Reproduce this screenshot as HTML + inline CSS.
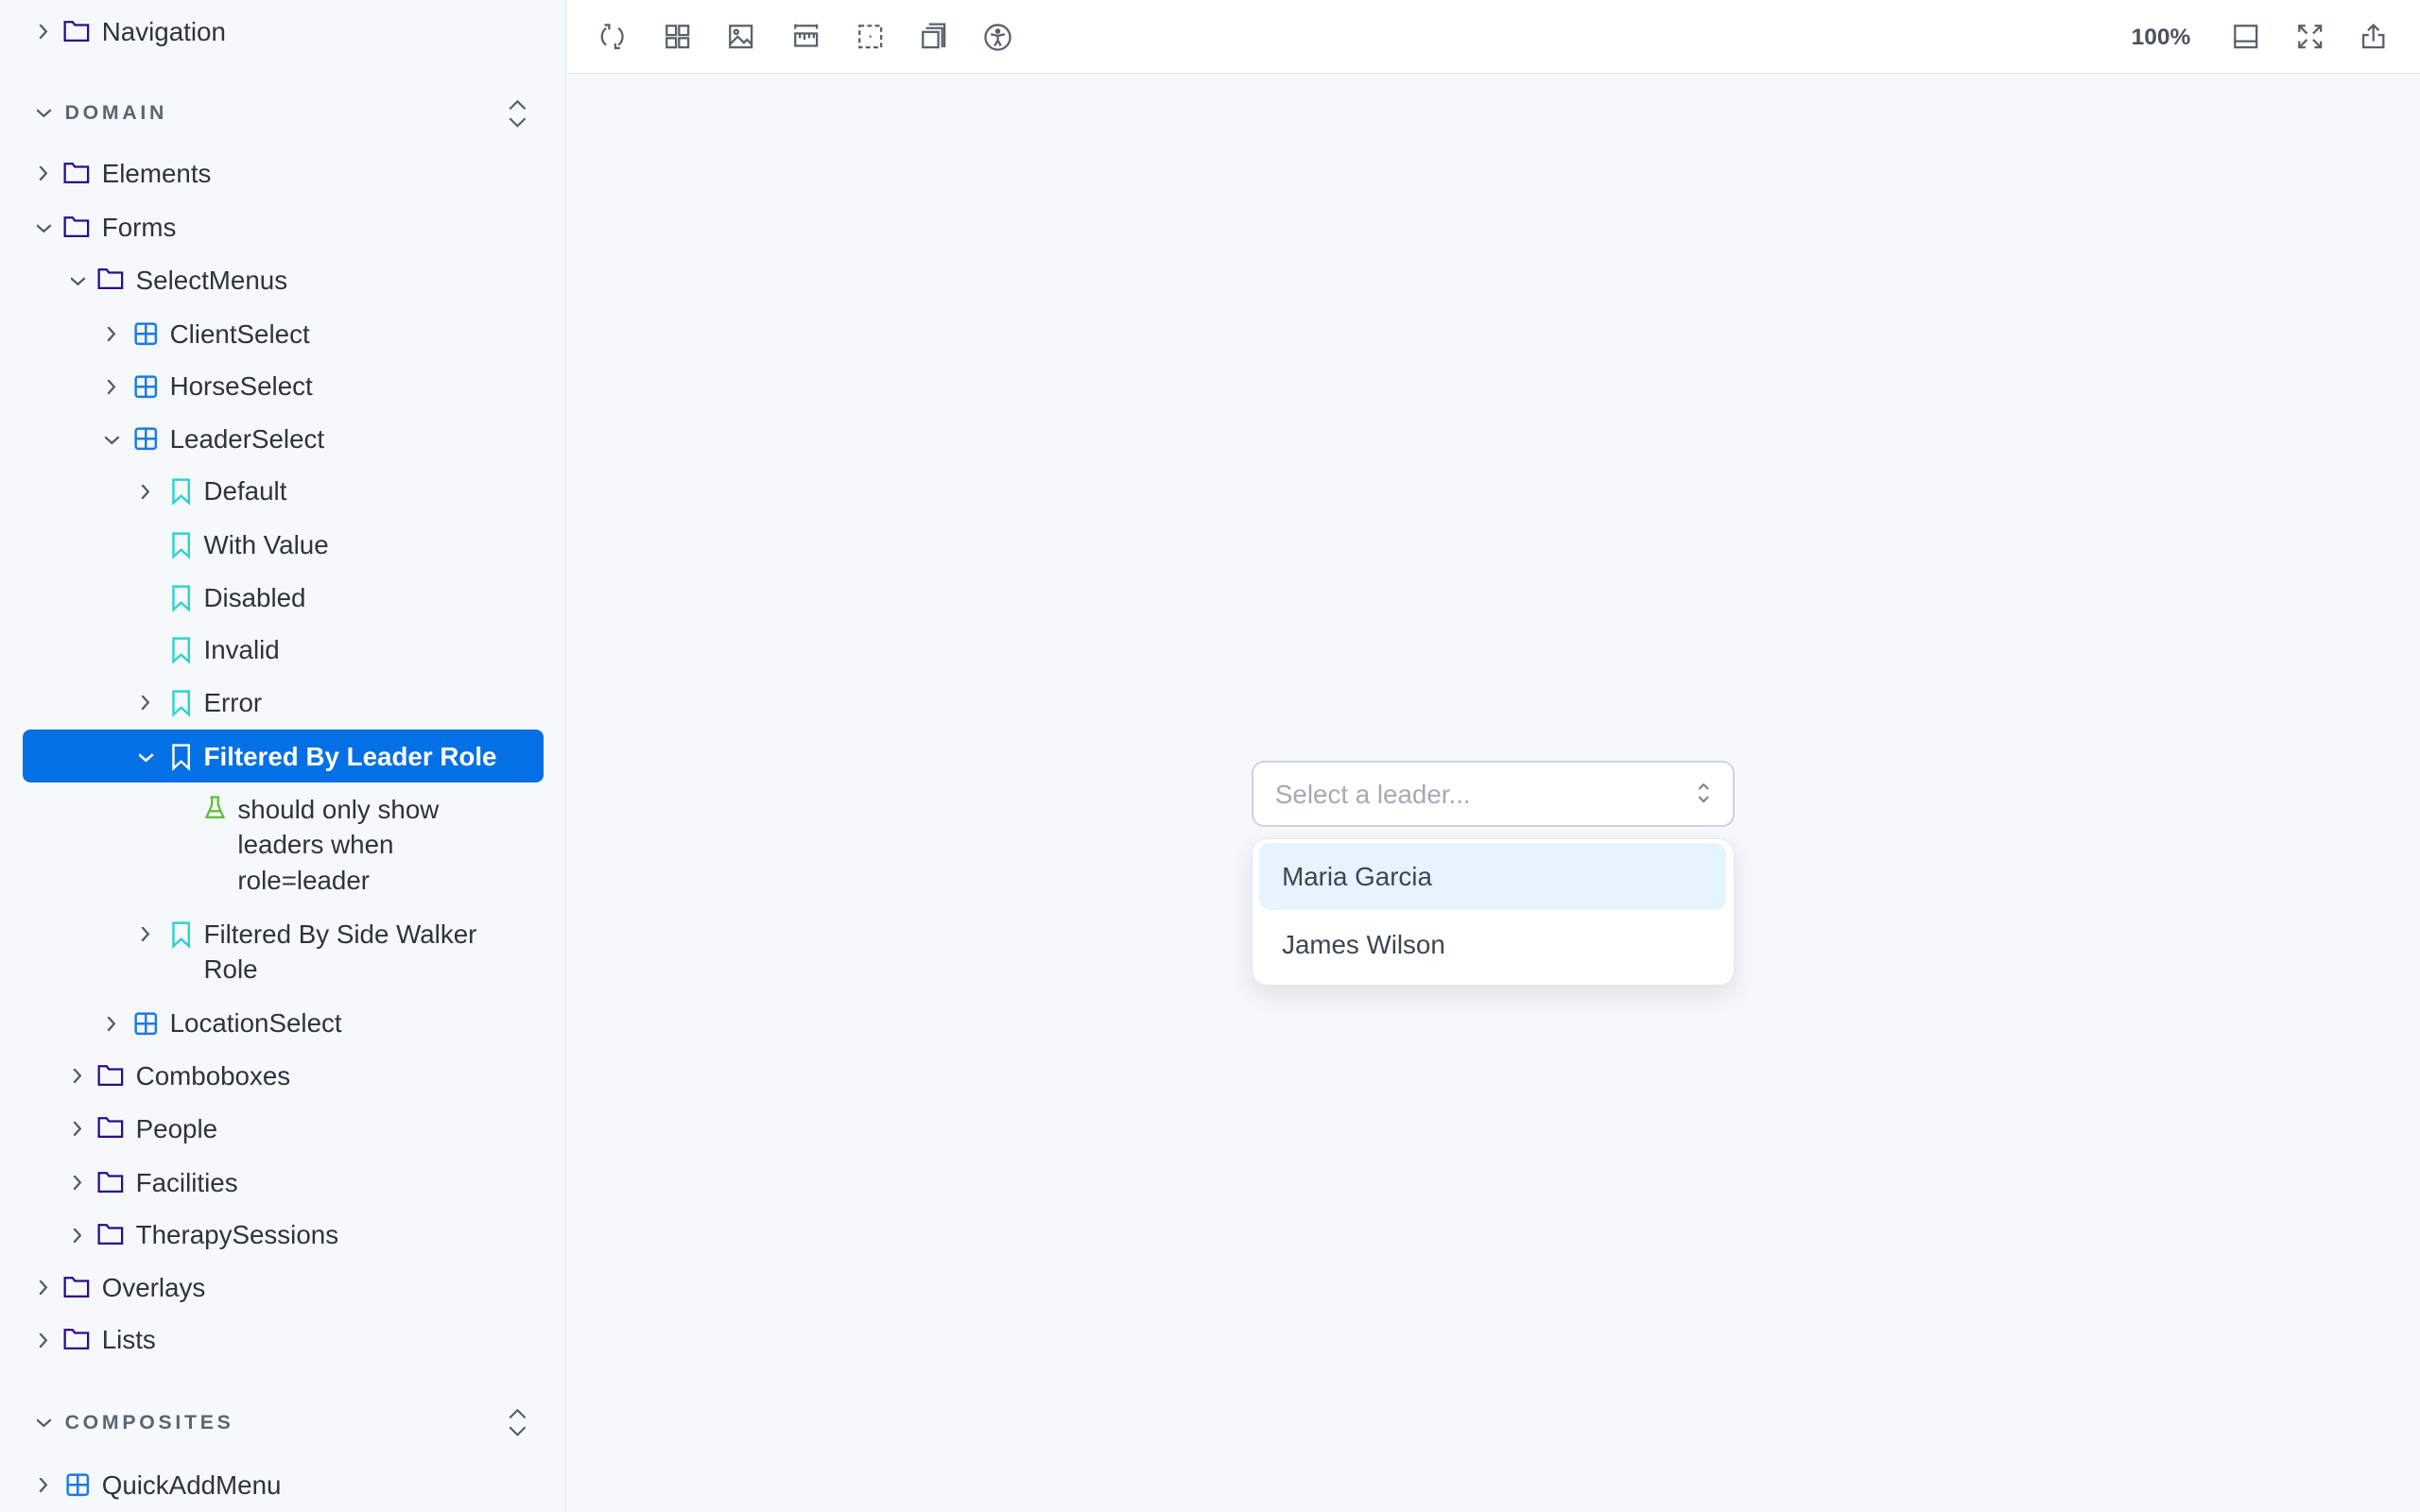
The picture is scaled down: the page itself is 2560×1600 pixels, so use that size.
<!DOCTYPE html>
<html><head><meta charset="utf-8"><style>
*{box-sizing:border-box;margin:0;padding:0}
html,body{width:2560px;height:1600px;overflow:hidden;background:#f6f9fc}
#root{zoom:1.63265;width:1568px;height:980px;position:relative;font-family:"Liberation Sans",sans-serif;color:#2e3438}
.side{position:absolute;left:0;top:0;width:367px;height:980px;background:#f6f9fc;border-right:1px solid #e3e7ec}
.row{position:absolute;font-size:17px;line-height:23px;white-space:nowrap}
.row svg{position:absolute}
.hdr{position:absolute;font-size:13px;font-weight:bold;letter-spacing:2.3px;color:#5c6670}
.sel{position:absolute;left:15px;top:473px;width:337px;height:34px;background:#0370e6;border-radius:5px}
.main{position:absolute;left:368px;top:0;right:0;bottom:0;background:#f6f8fb}
.tb{position:absolute;left:0;top:0;right:0;height:48px;background:#fff;border-bottom:1px solid #e3e7ec}
.tb svg{position:absolute;top:15px}
</style></head><body><div id="root">
<div class="side">
<svg width="0" height="0" style="position:absolute">
<defs>
<g id="chr"><path d="M2 0l4 4.5L2 9" fill="none" stroke="#555c63" stroke-width="1.4"/></g>
<g id="chd"><path d="M0 2l4.5 4L9 2" fill="none" stroke="#555c63" stroke-width="1.4"/></g>
<g id="fold"><path d="M1 2h5l1.5 2H16v10H1z" fill="none" stroke="#2c0b8a" stroke-width="1.4"/></g>
<g id="comp"><rect x="1" y="1" width="13" height="13" rx="1.5" fill="none" stroke="#1b7ae6" stroke-width="1.5"/><path d="M7.5 1v13M1 7.5h13" stroke="#1b7ae6" stroke-width="1.5"/></g>
<g id="bm"><path d="M1.5 1h10v15l-5-4.5-5 4.5z" fill="none" stroke="#2ed3d0" stroke-width="1.5"/></g>
<g id="bmw"><path d="M1.5 1h10v15l-5-4.5-5 4.5z" fill="none" stroke="#fff" stroke-width="1.5"/></g>
</defs></svg>

<div class="row" style="left:0;top:9px"><svg style="left:24px;top:7px" width="9" height="10"><use href="#chr"/></svg><svg style="left:41px;top:3px" width="18" height="16"><use href="#fold"/></svg><span style="position:absolute;left:66px">Navigation</span></div>

<div class="hdr" style="left:42px;top:66px">DOMAIN</div>
<svg style="position:absolute;left:24px;top:69px" width="10" height="8"><use href="#chd"/></svg>
<svg style="position:absolute;left:328px;top:64px" width="14" height="20"><path d="M2 7l5-5 5 5M2 13l5 5 5-5" fill="none" stroke="#555c63" stroke-width="1.3"/></svg>

<div class="sel"></div>

<div id="tree"></div>

<div class="hdr" style="left:42px;top:915px">COMPOSITES</div>
<svg style="position:absolute;left:24px;top:918px" width="10" height="8"><use href="#chd"/></svg>
<svg style="position:absolute;left:328px;top:912px" width="14" height="20"><path d="M2 7l5-5 5 5M2 13l5 5 5-5" fill="none" stroke="#555c63" stroke-width="1.3"/></svg>
</div>

<div class="main">
<div class="tb">
<svg style="left:20px" width="18" height="18" viewBox="0 0 18 18" fill="none" stroke="#59616a" stroke-width="1.4"><path d="M5 3.5A7 7 0 0 0 5 14.5M13 3.5A7 7 0 0 1 13 14.5M4 1.5h3v3M14 16.5h-3v-3"/></svg>
<svg style="left:62px" width="18" height="18" fill="none" stroke="#59616a" stroke-width="1.4"><rect x="2" y="2" width="6" height="6"/><rect x="10" y="2" width="6" height="6"/><rect x="2" y="10" width="6" height="6"/><rect x="10" y="10" width="6" height="6"/></svg>
<svg style="left:103px" width="18" height="18" fill="none" stroke="#59616a" stroke-width="1.4"><rect x="2" y="2" width="14" height="14"/><circle cx="6" cy="6" r="1.3"/><path d="M2 14l5-5 4 4 2-2 3 3"/></svg>
<svg style="left:145px" width="18" height="18" fill="none" stroke="#59616a" stroke-width="1.4"><path d="M2 2h14M2 1v3M16 1v3"/><rect x="2" y="7" width="14" height="8"/><path d="M5 7v3M8 7v4M11 7v3M14 7v3"/></svg>
<svg style="left:187px" width="18" height="18" fill="none" stroke="#59616a" stroke-width="1.4" stroke-dasharray="3 2"><rect x="2" y="2" width="14" height="14"/><circle cx="9" cy="9" r=".7" fill="#59616a" stroke="none"/></svg>
<svg style="left:228px" width="18" height="18" fill="none" stroke="#59616a" stroke-width="1.4"><rect x="2" y="6" width="10" height="10"/><path d="M4 3.5h10.5V16M6 1h10v15"/></svg>
<svg style="left:269px" width="19" height="19" fill="none" stroke="#59616a" stroke-width="1.4"><circle cx="9.5" cy="9.5" r="8"/><circle cx="9.5" cy="5.5" r="1" fill="#59616a"/><path d="M5 7.5l4.5 1 4.5-1M9.5 8.5v3l-2 3.5M9.5 11.5l2 3.5"/></svg>
<div style="position:absolute;left:1013px;top:16px;font-size:15px;font-weight:bold;color:#4a525a">100%</div>
<svg style="left:1078px" width="18" height="18" fill="none" stroke="#59616a" stroke-width="1.4"><rect x="2" y="2" width="14" height="14"/><path d="M2 12h14"/></svg>
<svg style="left:1120px" width="18" height="18" fill="none" stroke="#59616a" stroke-width="1.4"><path d="M2 6V2h4M12 2h4v4M16 12v4h-4M6 16H2v-4M2 2l5 5M16 2l-5 5M16 16l-5-5M2 16l5-5"/></svg>
<svg style="left:1161px" width="18" height="18" fill="none" stroke="#59616a" stroke-width="1.4"><path d="M9 12V1.5M5.5 5L9 1.5 12.5 5M6 8H2.5v8h13V8H12"/></svg>
</div>
<div style="position:absolute;left:443px;top:493px;width:313px;height:43px;background:#fff;border:1.5px solid #cfd4da;border-radius:8px;font-size:17px;color:#a4abb2;padding:11px 14px">Select a leader...</div>
<svg style="position:absolute;left:731px;top:506px" width="10" height="16" fill="none" stroke="#7c848c" stroke-width="1.3"><path d="M2 5.5l3-3 3 3M2 10.5l3 3 3-3"/></svg>
<div style="position:absolute;left:443px;top:543px;width:313px;height:96px;background:#fff;border:1px solid #e3e7ec;border-radius:10px;box-shadow:0 6px 16px rgba(0,0,0,.1)">
<div style="position:absolute;left:4px;top:3px;width:303px;height:43px;background:#e5f4fd;border-radius:7px"></div>
<div style="position:absolute;left:19px;top:15px;font-size:17px;color:#3b4650">Maria Garcia</div>
<div style="position:absolute;left:19px;top:59px;font-size:17px;color:#3b4650">James Wilson</div>
</div>
</div>
</div>
<script>
var rows=[
[1,'chr','fold','Elements',112],[1,'chd','fold','Forms',147],[2,'chd','fold','SelectMenus',181],
[3,'chr','comp','ClientSelect',216],[3,'chr','comp','HorseSelect',250],[3,'chd','comp','LeaderSelect',284],
[4,'chr','bm','Default',318],[4,'','bm','With Value',353],[4,'','bm','Disabled',387],[4,'','bm','Invalid',421],
[4,'chr','bm','Error',455],[4,'chdw','bmw','Filtered By Leader Role',490],[5,'','test','should only show<br>leaders when<br>role=leader',524],
[4,'chr','bm','Filtered By Side Walker<br>Role',605],[3,'chr','comp','LocationSelect',663],
[2,'chr','fold','Comboboxes',697],[2,'chr','fold','People',731],[2,'chr','fold','Facilities',766],[2,'chr','fold','TherapySessions',800],
[1,'chr','fold','Overlays',834],[1,'chr','fold','Lists',868],[1,'chr','comp','QuickAddMenu',962]];
var h='';
rows.forEach(function(r){var l=r[0],ox=(l-1)*22,y=r[4]-11;var white=r[1]=='chdw';
h+='<div class="row" style="left:0;top:'+y+'px;'+(white?'color:#fff;font-weight:bold':'')+'">';
if(r[1]=='chr')h+='<svg style="left:'+(24+ox)+'px;top:7px" width="9" height="10"><use href="#chr"/></svg>';
if(r[1]=='chd'||white)h+='<svg style="left:'+(24+ox)+'px;top:8px" width="10" height="8">'+(white?'<path d="M0 2l4.5 4L9 2" fill="none" stroke="#fff" stroke-width="1.6"/>':'<use href="#chd"/>')+'</svg>';
var ix=41+ox;
if(r[2]=='fold')h+='<svg style="left:'+ix+'px;top:3px" width="18" height="16"><use href="#fold"/></svg>';
if(r[2]=='comp')h+='<svg style="left:'+(ix+2)+'px;top:4px" width="16" height="16"><use href="#comp"/></svg>';
if(r[2]=='bm'||r[2]=='bmw')h+='<svg style="left:'+(ix+4)+'px;top:3px" width="14" height="18"><use href="#'+r[2]+'"/></svg>';
if(r[2]=='test')h+='<svg style="left:'+(ix+3)+'px;top:3px" width="14" height="16"><path d="M4 1h6M5 1v5L1.5 14h11L9 6V1M3.5 10h7" fill="none" stroke="#5bbf3c" stroke-width="1.4"/></svg>';
h+='<span style="position:absolute;left:'+(66+ox)+'px">'+r[3]+'</span></div>';});
document.getElementById('tree').innerHTML=h;
</script>
</body></html>
